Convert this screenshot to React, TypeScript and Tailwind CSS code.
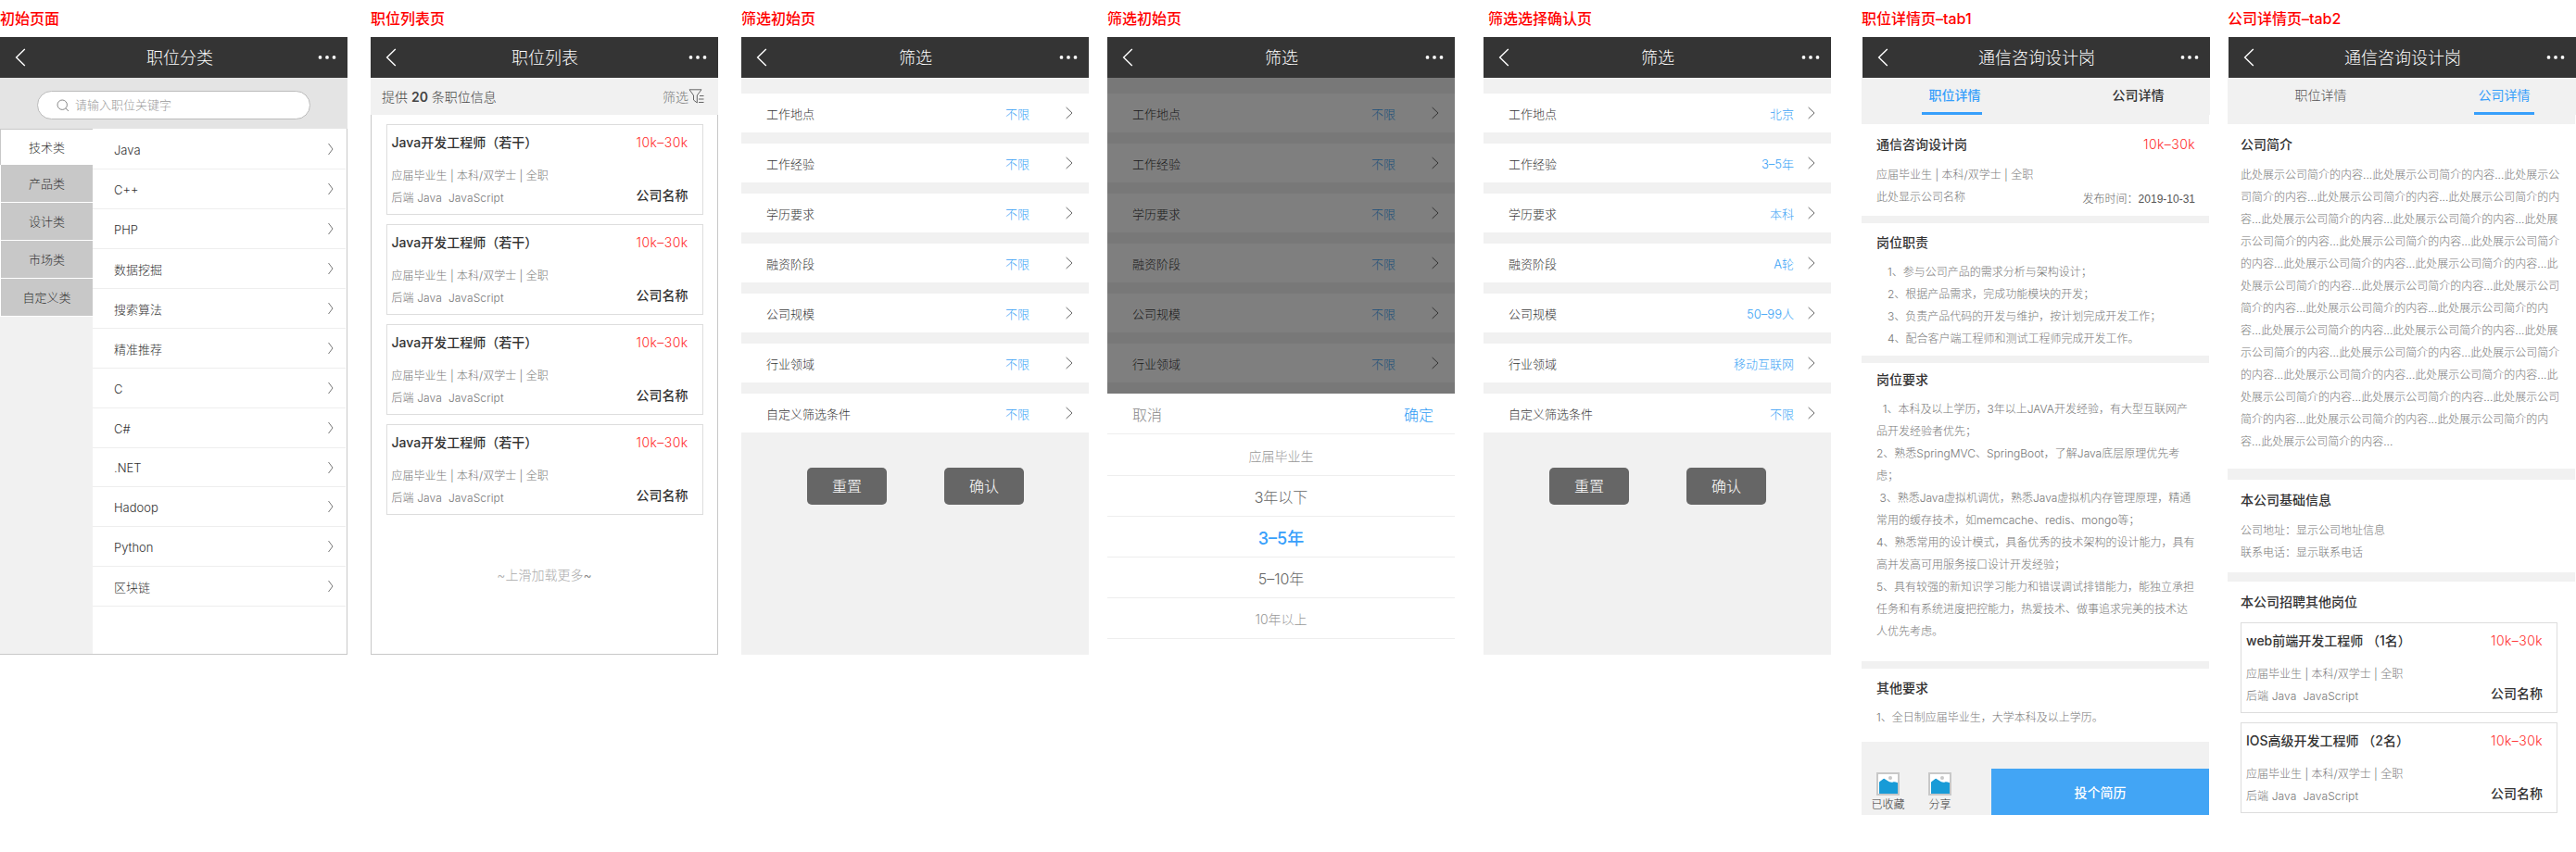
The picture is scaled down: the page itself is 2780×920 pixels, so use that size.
import type { ReactNode } from "react";
import clsx from "clsx";

const Chevron = ({ className, wide = false }: { className?: string; wide?: boolean }) => (
  <svg
    width={wide ? 8 : 6}
    height="14"
    viewBox={wide ? "0 0 8 14" : "0 0 6 14"}
    fill="none"
    stroke="currentColor"
    className={clsx("shrink-0", className)}
  >
    <path d={wide ? "M0.6 1 L7 7 L0.6 13" : "M0.5 1 L5 7 L0.5 13"} />
  </svg>
);

const Header = ({ title, shift = false }: { title: string; shift?: boolean }) => (
  <div className="flex h-11 w-[375px] shrink-0 items-center justify-between bg-[#343434] pr-[12px] pl-[16px] text-white">
    <svg width="12" height="20" viewBox="0 0 12 20" fill="none" stroke="currentColor" strokeWidth="1.4">
      <path d="M10.8 1 L1.6 10 L10.8 19" />
    </svg>
    <h1 className={clsx("pt-[2px] text-[18px] leading-[42px] font-light", shift ? "pl-[17px]" : "pl-[5px]")}>{title}</h1>
    <svg width="20" height="6" viewBox="0 0 20 6" fill="currentColor">
      <circle cx="2.5" cy="2.9" r="1.9" />
      <circle cx="10" cy="2.9" r="1.9" />
      <circle cx="17.5" cy="2.9" r="1.9" />
    </svg>
  </div>
);

type ScreenProps = { label: string; title: string; className?: string; labelClass?: string; shift?: boolean; children: ReactNode };

const Screen = ({ label, title, className, labelClass, shift, children }: ScreenProps) => (
  <section className={clsx("flex w-[375px] shrink-0 flex-col", className)}>
    <h2 className={clsx("h-10 text-[16px] leading-[40px] font-medium whitespace-nowrap text-[#ff0000]", labelClass)}>{label}</h2>
    <Header title={title} shift={shift} />
    {children}
  </section>
);

const categories = ["产品类", "设计类", "市场类", "自定义类"];
const skills = ["Java", "C++", "PHP", "数据挖掘", "搜索算法", "精准推荐", "C", "C#", ".NET", "Hadoop", "Python", "区块链"];

const CategoryScreen = () => (
  <Screen label="初始页面" title="职位分类" shift>
    <div className="flex h-[55px] justify-center bg-[#e4e4e4] pt-[14px]">
      <div className="flex h-[31px] w-[295px] items-center gap-[6px] rounded-full border border-[#bbb] bg-white pl-[20px]">
        <svg width="14" height="14" viewBox="0 0 14 14" fill="none" stroke="#888">
          <circle cx="6.2" cy="6.2" r="5.2" />
          <path d="M9.8 10 L13 13" />
        </svg>
        <span className="text-[13px] font-light text-[#999]">请输入职位关键字</span>
      </div>
    </div>
    <div className="flex h-[568px] border-r border-b border-[#c8c8c8]">
      <div className="w-[100px] bg-[#f1f1f1] text-center text-[13px] font-light text-[#333]">
        <div className="h-[39px] border-t border-l border-[#c8c8c8] bg-white leading-[39px]">技术类</div>
        {categories.map(name => (
          <div key={name} className="h-[41px] border-b border-l border-white bg-[#c8c8c8] leading-[41px]">{name}</div>
        ))}
      </div>
      <ul className="w-[273px] bg-white pt-px text-[13px] font-light text-[#333]">
        {skills.map(name => (
          <li
            key={name}
            className={clsx("flex items-center justify-between border-b border-[#eee] pr-[13px] pl-[23px]", name === ".NET" ? "h-[42px]" : "h-[43px]")}
          >
            <span className="pt-[3px]">{name}</span>
            <Chevron className="text-[#777]" />
          </li>
        ))}
      </ul>
    </div>
  </Screen>
);

const JobCard = ({ title }: { title: string }) => (
  <article className="flex h-[98px] w-[342px] justify-between border border-[#ddd] pr-[15px] pl-[5px] whitespace-nowrap text-[#333]">
    <div className="pt-[7px] font-light">
      <h3 className="text-[14px] leading-6 font-medium">{title}</h3>
      <p className="mt-[12px] text-[12px] leading-6 text-[#777]">应届毕业生 | 本科/双学士 | 全职</p>
      <p className="text-[12px] leading-6 tracking-[0.1px] whitespace-pre text-[#777]">后端 Java&nbsp; JavaScript</p>
    </div>
    <div className="flex flex-col items-end pt-[7px] text-[14px] leading-6">
      <span className="font-light tracking-[0.4px] text-[#ff2d2d]">10k–30k</span>
      <span className="mt-[33px] font-medium">公司名称</span>
    </div>
  </article>
);

const ListScreen = () => (
  <Screen label="职位列表页" title="职位列表" className="ml-[25px]">
    <div className="flex h-10 items-center justify-between bg-[#f1f1f1] pr-[15px] pl-[12px] text-[14px] font-light text-[#444]">
      <span>
        提供 <b className="font-semibold">20</b> 条职位信息
      </span>
      <span className="flex items-center text-[#777]">
        筛选
        <svg width="17" height="16" viewBox="0 0 17 16" fill="none" stroke="#666">
          <path d="M1 0.8 H14 L9.3 7 V15 L5.5 12 V7 Z" />
          <path d="M12 7.5 H16.5 M11 11 H16.5 M11 14.5 H16.5" />
        </svg>
      </span>
    </div>
    <div className="flex h-[583px] flex-col items-center gap-[10px] border-x border-b border-[#c8c8c8] pt-[10px]">
      {[0, 1, 2, 3].map(n => (
        <JobCard key={n} title="Java开发工程师（若干）" />
      ))}
      <p className="mt-[43px] text-[14px] leading-6 font-light text-[#aaa]">
        ~上滑加载更多<span className="text-[#777]">~</span>
      </p>
    </div>
  </Screen>
);

const filterNames = ["工作地点", "工作经验", "学历要求", "融资阶段", "公司规模", "行业领域", "自定义筛选条件"];
const picked = ["北京", "3–5年", "本科", "A轮", "50–99人", "移动互联网", "不限"];

const FilterRows = ({ count = 7, values }: { count?: number; values?: string[] }) => (
  <div className="flex flex-col gap-[12px] pt-[17px]">
    {filterNames.slice(0, count).map((name, i) => (
      <div key={name} className="flex h-[42px] items-center bg-white pr-[17px] pl-[27px] text-[13px] font-light">
        <span className="flex-1 pt-[3px] text-[#333]">{name}</span>
        <span className={clsx("pt-[3px] text-[#379ff5]", values ? "pr-[15px]" : "pr-[39px]")}>{values ? values[i] : "不限"}</span>
        <Chevron wide className="text-[#666]" />
      </div>
    ))}
  </div>
);

const FilterForm = ({ values }: { values?: string[] }) => (
  <div className="h-[623px] bg-[#f1f1f1]">
    <FilterRows values={values} />
    <div className="flex gap-[62px] pt-[38px] pl-[71px] text-[16px] font-light text-white">
      <button className="h-10 w-[86px] rounded-[5px] bg-[#666]">重置</button>
      <button className="h-10 w-[86px] rounded-[5px] bg-[#666]">确认</button>
    </div>
  </div>
);

const PickerScreen = () => (
  <Screen label="筛选初始页" title="筛选" className="ml-[20px]">
    <div className="relative h-[341px] bg-[#f1f1f1]">
      <FilterRows count={6} />
      <div className="absolute inset-0 bg-black/50" />
    </div>
    <div className="flex flex-col text-center text-[16px] font-light text-[#666]">
      <div className="flex h-[44px] items-center justify-between border-b border-[#eee] pt-[2px] pr-[23px] pl-[27px]">
        <span className="text-[#888]">取消</span>
        <span className="text-[#2d9bf5]">确定</span>
      </div>
      <div className="h-[45px] border-b border-[#eee] text-[14px] leading-[47px] text-[#999]">应届毕业生</div>
      <div className="h-[44px] border-b border-[#eee] leading-[46px]">3年以下</div>
      <div className="h-[44px] border-b border-[#eee] text-[18px] leading-[47px] font-medium text-[#379ffb]">3–5年</div>
      <div className="h-[44px] border-b border-[#eee] leading-[46px]">5–10年</div>
      <div className="h-[44px] border-b border-[#eee] text-[14px] leading-[46px] text-[#999]">10年以上</div>
    </div>
  </Screen>
);

const Tabs = ({ active }: { active: 0 | 1 }) => (
  <div className="w-[375px] bg-[#f1f1f1]">
    <div className="flex h-10 w-[376px] bg-[#f1f1f1] pl-[65px] text-[14px]">
      {["职位详情", "公司详情"].map((name, i) => (
        <div
          key={name}
          className={clsx(
            "h-10 w-[65px] border-b-[3px] text-center leading-[37px]",
            i === 0 ? "pl-[6px]" : "ml-[136px]",
            i === active ? "border-[#379ffb] text-[#379ffb]" : "border-transparent",
            i !== active && (active === 0 ? "text-[#333]" : "text-[#555]"),
            active === 0 ? "font-medium" : i === 1 ? "font-normal" : "font-light",
          )}
        >
          {name}
        </div>
      ))}
    </div>
    <div className="h-[10px]" />
  </div>
);

const Divider = ({ className }: { className: string }) => <div className={clsx("w-[375px] bg-[#f1f1f1]", className)} />;

const Lines = ({ lines, className }: { lines: string[]; className?: string }) => (
  <div className={clsx("text-[12px] leading-6 font-light whitespace-pre text-[#777]", className)}>
    {lines.map((line, i) => (
      <p key={i}>{line}</p>
    ))}
  </div>
);

const SectionTitle = ({ children }: { children: ReactNode }) => (
  <h3 className="text-[14px] leading-6 font-medium text-[#333]">{children}</h3>
);

const duties = [
  "1、参与公司产品的需求分析与架构设计；",
  "2、根据产品需求，完成功能模块的开发；",
  "3、负责产品代码的开发与维护，按计划完成开发工作；",
  "4、配合客户端工程师和测试工程师完成开发工作。",
];

const requirements = [
  "  1、本科及以上学历，3年以上JAVA开发经验，有大型互联网产",
  "品开发经验者优先；",
  "2、熟悉SpringMVC、SpringBoot，了解Java底层原理优先考",
  "虑；",
  " 3、熟悉Java虚拟机调优，熟悉Java虚拟机内存管理原理，精通",
  "常用的缓存技术，如memcache、redis、mongo等；",
  "4、熟悉常用的设计模式，具备优秀的技术架构的设计能力，具有",
  "高并发高可用服务接口设计开发经验；",
  "5、具有较强的新知识学习能力和错误调试排错能力，能独立承担",
  "任务和有系统进度把控能力，热爱技术、做事追求完美的技术达",
  "人优先考虑。",
];

const PictureIcon = () => (
  <svg width="25" height="25" viewBox="0 0 25 25">
    <rect x="1" y="1" width="23" height="23" fill="#fff" stroke="#c8c8c8" strokeWidth="2" />
    <circle cx="15" cy="6" r="2" fill="#c8c8c8" />
    <path d="M3 10.5 L7.5 7 Q8.5 6.6 9.5 7.4 L14 10.3 Q16.5 11.3 18.5 10.2 Q20.5 10 23 11.2 V23 H3 Z" fill="#189bd7" />
  </svg>
);

const JobDetailScreen = () => (
  <Screen label="职位详情页–tab1" title="通信咨询设计岗" className="ml-[34px]" labelClass="-ml-px">
    <div className="-ml-px w-[375px]">
      <Tabs active={0} />
      <div className="flex h-[99px] justify-between pt-[10px] pr-[15px] pl-[16px]">
        <div>
          <SectionTitle>通信咨询设计岗</SectionTitle>
          <Lines className="mt-[9px]" lines={["应届毕业生 | 本科/双学士 | 全职", "此处显示公司名称"]} />
        </div>
        <div className="flex flex-col items-end leading-6 font-light">
          <span className="text-[14px] tracking-[0.4px] text-[#ff2d2d]">10k–30k</span>
          <span className="mt-[35px] text-[12px] text-[#666]">
            发布时间：<span className="font-['Liberation_Sans'] text-[#555]">2019-10-31</span>
          </span>
        </div>
      </div>
      <Divider className="h-[8px]" />
      <div className="h-[143px] pt-[9px] pl-[16px]">
        <SectionTitle>岗位职责</SectionTitle>
        <Lines className="mt-[8px] pl-[12px]" lines={duties} />
      </div>
      <Divider className="h-[8px]" />
      <div className="h-[322px] pt-[6px] pl-[16px]">
        <SectionTitle>岗位要求</SectionTitle>
        <Lines className="mt-[8px]" lines={requirements} />
      </div>
      <Divider className="h-[8px]" />
      <div className="h-[79px] pt-[9px] pl-[16px]">
        <SectionTitle>其他要求</SectionTitle>
        <Lines className="mt-[8px]" lines={["1、全日制应届毕业生，大学本科及以上学历。"]} />
      </div>
      <div className="flex h-[79px] items-end justify-between bg-[#f1f1f1]">
        <div className="flex pl-[4px] text-[12px] font-light text-[#333]">
          {["已收藏", "分享"].map(name => (
            <div key={name} className="flex h-[46px] w-[49px] flex-col items-center first:mr-[7px]">
              <PictureIcon />
              <span className="leading-5">{name}</span>
            </div>
          ))}
        </div>
        <button className="h-[50px] w-[235px] bg-[#42a5f5] text-[14px] font-medium text-white">投个简历</button>
      </div>
    </div>
  </Screen>
);

const intro = [
  "此处展示公司简介的内容...此处展示公司简介的内容...此处展示公",
  "司简介的内容...此处展示公司简介的内容...此处展示公司简介的内",
  "容...此处展示公司简介的内容...此处展示公司简介的内容...此处展",
  "示公司简介的内容...此处展示公司简介的内容...此处展示公司简介",
  "的内容...此处展示公司简介的内容...此处展示公司简介的内容...此",
  "处展示公司简介的内容...此处展示公司简介的内容...此处展示公司",
  "简介的内容...此处展示公司简介的内容...此处展示公司简介的内",
  "容...此处展示公司简介的内容...此处展示公司简介的内容...此处展",
  "示公司简介的内容...此处展示公司简介的内容...此处展示公司简介",
  "的内容...此处展示公司简介的内容...此处展示公司简介的内容...此",
  "处展示公司简介的内容...此处展示公司简介的内容...此处展示公司",
  "简介的内容...此处展示公司简介的内容...此处展示公司简介的内",
  "容...此处展示公司简介的内容...",
];

const CompanyScreen = () => (
  <Screen label="公司详情页–tab2" title="通信咨询设计岗" className="ml-[20px]" labelClass="-ml-px">
    <div className="-ml-px w-[375px]">
      <Tabs active={1} />
      <div className="h-[372px] pt-[10px] pl-[14px]">
        <SectionTitle>公司简介</SectionTitle>
        <Lines className="mt-[9px]" lines={intro} />
      </div>
      <Divider className="h-[12px]" />
      <div className="h-[100px] pt-[10px] pl-[14px]">
        <SectionTitle>本公司基础信息</SectionTitle>
        <Lines className="mt-[9px]" lines={["公司地址：显示公司地址信息", "联系电话：显示联系电话"]} />
      </div>
      <Divider className="h-[10px]" />
      <div className="flex flex-col gap-[10px] pt-[10px] pl-[14px]">
        <SectionTitle>本公司招聘其他岗位</SectionTitle>
        <JobCard title="web前端开发工程师 （1名）" />
        <JobCard title="IOS高级开发工程师 （2名）" />
      </div>
    </div>
  </Screen>
);

const App = () => (
  <main className="flex h-[920px] w-[2780px] overflow-hidden bg-white font-['Inter','Noto_Sans_CJK_SC',sans-serif]">
    <CategoryScreen />
    <ListScreen />
    <Screen label="筛选初始页" title="筛选" className="ml-[25px]">
      <FilterForm />
    </Screen>
    <PickerScreen />
    <Screen label="筛选选择确认页" title="筛选" className="ml-[31px]" labelClass="pl-[5px]">
      <FilterForm values={picked} />
    </Screen>
    <JobDetailScreen />
    <CompanyScreen />
  </main>
);

export default App;
